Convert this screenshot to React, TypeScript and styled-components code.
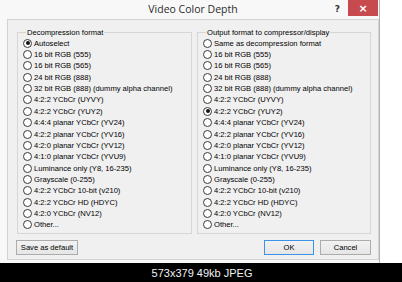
import React from "react";
import styled, { createGlobalStyle } from "styled-components";

const Global = createGlobalStyle`
  html, body { margin: 0; padding: 0; background: #ffffff; }
  * { box-sizing: border-box; }
`;

const Page = styled.div`
  width: 402px;
  height: 282px;
  display: flex;
  flex-direction: column;
  overflow: hidden;
  font-family: "Liberation Sans", Arial, sans-serif;
`;

const Stage = styled.div`
  height: 263px;
  display: flex;
  background: #ffffff;
`;

const Window = styled.div`
  width: 380px;
  display: flex;
  flex-direction: column;
  background: #f8f8f8;
  border-right: 1px solid #b4b4b4;
`;

const TitleBar = styled.div`
  height: 19px;
  display: grid;
  grid-template-columns: 1fr auto 1fr;
  align-items: start;
`;

const Title = styled.div`
  font-family: "Open Sans", "Noto Sans", sans-serif;
  font-size: 10.5px;
  line-height: 19px;
  color: #2b2b2b;
  padding-left: 7px;
`;

const Controls = styled.div`
  display: flex;
  justify-content: flex-end;
  align-items: flex-start;
  padding-right: 1px;
`;

const Help = styled.div`
  font-family: "DejaVu Sans", sans-serif;
  font-size: 9px;
  font-weight: bold;
  color: #333;
  line-height: 18px;
  margin-right: 8px;
`;

const Close = styled.div`
  width: 30px;
  height: 16px;
  background: #c74a4e;
  color: #ffffff;
  display: flex;
  align-items: center;
  justify-content: center;
  font-family: "DejaVu Sans", sans-serif;
  font-size: 11px;
  font-weight: bold;
`;

const Client = styled.div`
  flex: 1;
  margin: 0 0 3px 7px;
  border: 1px solid #d2d2d2;
  background: #f0f0f0;
  padding: 8px 7px 4px 9px;
  display: flex;
  flex-direction: column;
`;

const Groups = styled.div`
  display: flex;
  gap: 5px;
`;

const Group = styled.fieldset<{ $w: number }>`
  width: ${(p) => p.$w}px;
  margin: 0;
  padding: 0.6px 4px 2.4px 5px;
  border: 1px solid #d6d6d6;
  min-width: 0;
`;

const Legend = styled.legend`
  margin-left: 3px;
  padding: 0 1px;
  font-size: 7.6px;
  line-height: 9px;
  color: #000;
`;

const Row = styled.div`
  height: 11.35px;
  display: flex;
  align-items: center;
  gap: 2px;
  font-size: 7.6px;
  color: #000;
  white-space: nowrap;
`;

const Radio = styled.span<{ $on?: boolean }>`
  width: 9px;
  height: 9px;
  flex: none;
  border-radius: 50%;
  border: 1px solid #3a3a3a;
  background: #ffffff;
  display: flex;
  align-items: center;
  justify-content: center;
  &::after {
    content: "";
    width: 4px;
    height: 4px;
    border-radius: 50%;
    background: ${(p) => (p.$on ? "#111" : "transparent")};
  }
`;

const ButtonRow = styled.div`
  margin-top: 6px;
  margin-left: -1px;
  display: flex;
  gap: 6px;
`;

const Button = styled.div<{ $w: number; $default?: boolean; $push?: boolean }>`
  width: ${(p) => p.$w}px;
  height: 15px;
  margin-left: ${(p) => (p.$push ? "auto" : "0")};
  border: 1px solid ${(p) => (p.$default ? "#3c93e6" : "#acacac")};
  background: linear-gradient(#f2f2f2, #e6e6e6);
  display: flex;
  align-items: center;
  justify-content: center;
  font-size: 7.6px;
  color: #000;
`;

const Caption = styled.div`
  flex: 1;
  background: #000;
  color: #f2f2f2;
  font-size: 11px;
  display: flex;
  align-items: center;
  justify-content: center;
  padding-left: 2px;
`;

const decompression = [
  "Autoselect",
  "16 bit RGB (555)",
  "16 bit RGB (565)",
  "24 bit RGB (888)",
  "32 bit RGB (888) (dummy alpha channel)",
  "4:2:2 YCbCr (UYVY)",
  "4:2:2 YCbCr (YUY2)",
  "4:4:4 planar YCbCr (YV24)",
  "4:2:2 planar YCbCr (YV16)",
  "4:2:0 planar YCbCr (YV12)",
  "4:1:0 planar YCbCr (YVU9)",
  "Luminance only (Y8, 16-235)",
  "Grayscale (0-255)",
  "4:2:2 YCbCr 10-bit (v210)",
  "4:2:2 YCbCr HD (HDYC)",
  "4:2:0 YCbCr (NV12)",
  "Other...",
];

const output = ["Same as decompression format", ...decompression.slice(1)];

function RadioGroup({ title, items, selected, width }: { title: string; items: string[]; selected: number; width: number }) {
  return (
    <Group $w={width}>
      <Legend>{title}</Legend>
      {items.map((t, i) => (
        <Row key={t}>
          <Radio $on={i === selected} />
          <span>{t}</span>
        </Row>
      ))}
    </Group>
  );
}

export default function App() {
  return (
    <>
      <Global />
      <Page>
        <Stage>
          <Window>
            <TitleBar>
              <span />
              <Title>Video Color Depth</Title>
              <Controls>
                <Help>?</Help>
                <Close>×</Close>
              </Controls>
            </TitleBar>
            <Client>
              <Groups>
                <RadioGroup title="Decompression format" items={decompression} selected={0} width={175} />
                <RadioGroup title="Output format to compressor/display" items={output} selected={6} width={174} />
              </Groups>
              <ButtonRow>
                <Button $w={62}>Save as default</Button>
                <Button $w={50} $default $push>OK</Button>
                <Button $w={51}>Cancel</Button>
              </ButtonRow>
            </Client>
          </Window>
        </Stage>
        <Caption>573x379 49kb JPEG</Caption>
      </Page>
    </>
  );
}
